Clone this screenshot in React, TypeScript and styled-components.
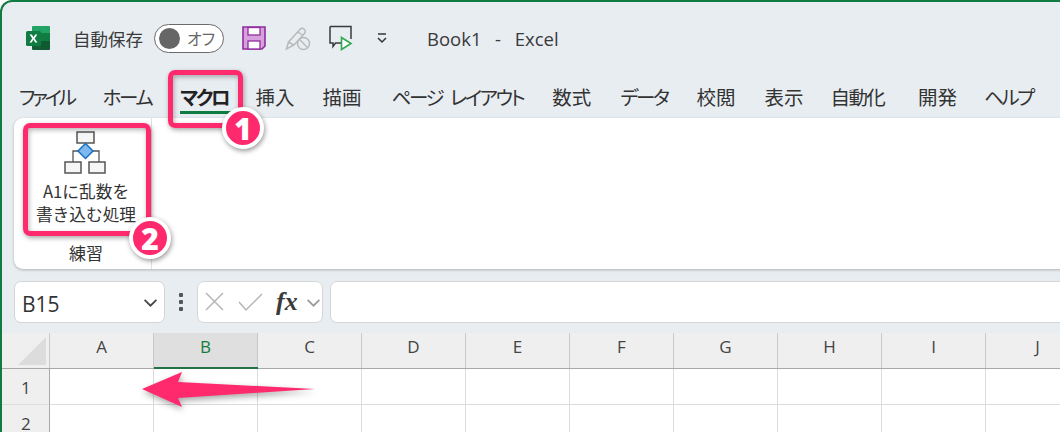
import styled, { createGlobalStyle } from 'styled-components';

const GlobalStyle = createGlobalStyle`
  html, body { margin: 0; padding: 0; background: #ffffff; overflow: hidden; }
  body { font-family: "Noto Sans CJK JP", "Noto Sans", sans-serif; color: #333; }
`
const Frame = styled.div`
  position: relative;
  width: 1060px;
  height: 432px;
  box-sizing: border-box;
  overflow: hidden;
  background: #e8edf2;
  border-top: 2px solid #107c41;
  border-left: 2px solid #107c41;
  border-top-left-radius: 12px;
`
const TitleBar = styled.div`
  display: flex;
  align-items: center;
  box-sizing: border-box;
  height: 76px;
  padding: 0 0 4px 24px;
`
const AutoSaveLabel = styled.span`
  font-size: 17.5px;
  margin-left: 23px;
  color: #3a3a3a;
`
const Toggle = styled.div`
  display: flex;
  align-items: center;
  justify-content: space-between;
  box-sizing: border-box;
  width: 70px;
  height: 29px;
  margin-left: 11px;
  padding: 0 8px 0 4px;
  background: #fff;
  border: 1px solid #6a6a6a;
  border-radius: 15px;
  font-size: 16px;
  font-feature-settings: "palt";
  color: #666;
`
const Knob = styled.span`
  width: 21px;
  height: 21px;
  border-radius: 50%;
  background: #666;
`
const QuickIcon = styled.svg<{ $left: number }>`
  display: block;
  margin-left: ${props => props.$left}px;
  flex: none;
`
const BookTitle = styled.span`
  margin-left: 39px;
  font-family: "Open Sans", "Noto Sans CJK JP", sans-serif;
  font-size: 18.5px;
  white-space: pre;
  word-spacing: 2px;
  color: #3a3a3a;
`
const Tabs = styled.div`
  display: flex;
  height: 42px;
  padding-left: 17px;
  gap: 28px;
  font-size: 19.5px;
  font-feature-settings: "palt";
  color: #333;
  white-space: nowrap;
`
const Tab = styled.div<{ $active?: boolean; $track: number; $after: number }>`
  position: relative;
  box-sizing: border-box;
  height: 36px;
  padding-top: 2px;
  line-height: 34px;
  letter-spacing: ${props => props.$track}px;
  word-spacing: 6px;
  margin-right: ${props => props.$after}px;
  font-weight: ${props => props.$active ? 700 : 400};
  color: ${props => props.$active ? '#222' : '#333'};
  &::after {
    content: '';
    display: ${props => props.$active ? 'block' : 'none'};
    position: absolute;
    left: 0;
    right: ${props => props.$track}px;
    bottom: 0;
    height: 3px;
    background: #107c41;
  }
`
const Ribbon = styled.div`
  display: flex;
  width: 1100px;
  height: 151px;
  margin-left: 12px;
  margin-top: -2px;
  background: #fff;
  border-radius: 9px;
  box-shadow: 0 1px 3px rgba(0, 0, 0, 0.25);
`
const RibbonGroup = styled.div`
  box-sizing: border-box;
  width: 138px;
  padding-left: 7px;
  display: flex;
  flex-direction: column;
  align-items: center;
  border-right: 1px solid #e2e2e2;
`
const MacroIcon = styled.svg`
  display: block;
  margin-top: 13px;
`
const MacroLabel = styled.div`
  margin-top: 5px;
  font-size: 16.7px;
  line-height: 23px;
  text-align: center;
  white-space: nowrap;
  color: #333;
`
const GroupName = styled.div`
  margin-top: 15px;
  font-size: 17px;
  line-height: 24px;
  color: #333;
`
const FormulaRow = styled.div`
  display: flex;
  align-items: center;
  height: 42px;
  margin-top: 12px;
  padding-left: 12px;
`
const FieldBox = styled.div<{ $w: number; $left?: number }>`
  display: flex;
  align-items: center;
  box-sizing: border-box;
  width: ${props => props.$w}px;
  height: 42px;
  flex: none;
  margin-left: ${props => props.$left || 0}px;
  background: #fff;
  border: 1px solid #d5d5d5;
  border-radius: 7px;
`
const NameText = styled.span`
  margin: 3px 0 0 7px;
  flex: 1;
  font-family: "Open Sans", sans-serif;
  font-size: 21px;
  color: #333;
`
const NameChevron = styled.span`
  display: flex;
  margin-right: 6px;
`
const Dots = styled.div`
  display: flex;
  flex-direction: column;
  gap: 3px;
  width: 4px;
  margin: 0 14px;
`
const Dot = styled.span`
  width: 4px;
  height: 4px;
  border-radius: 1px;
  background: #555;
`
const FormulaIcons = styled.svg`
  display: block;
  margin-left: 7px;
  flex: none;
`
const FxText = styled.span`
  font-family: "Liberation Serif", serif;
  font-style: italic;
  font-weight: 700;
  font-size: 26px;
  margin: 0 8px 0 11px;
  color: #3a3a3a;
`
const Sheet = styled.div`
  margin-top: 10px;
  background: #fff;
`
const HeaderRow = styled.div`
  display: flex;
  height: 35px;
  background: #efefef;
  border-bottom: 1px solid #a8a8a8;
`
const Corner = styled.div`
  position: relative;
  box-sizing: border-box;
  width: 48px;
  flex: none;
  border-right: 1px solid #c8c8c8;
  &::after {
    content: '';
    position: absolute;
    right: 3px;
    bottom: 3px;
    border-style: solid;
    border-width: 0 0 28px 28px;
    border-color: transparent transparent #dcdcdc transparent;
  }
`
const ColHead = styled.div<{ $selected?: boolean }>`
  position: relative;
  box-sizing: border-box;
  width: 104px;
  flex: none;
  text-align: center;
  font-family: "Open Sans", sans-serif;
  font-size: 17px;
  line-height: 27px;
  border-right: 1px solid #c8c8c8;
  background: ${props => props.$selected ? '#dfdfdf' : 'transparent'};
  color: ${props => props.$selected ? '#107c41' : '#444'};
  &::after {
    content: '';
    display: ${props => props.$selected ? 'block' : 'none'};
    position: absolute;
    left: 0;
    right: -1px;
    bottom: -1px;
    height: 2px;
    background: #217346;
  }
`
const Row = styled.div`
  display: flex;
  height: 36px;
`
const RowHead = styled.div`
  box-sizing: border-box;
  width: 48px;
  flex: none;
  padding-left: 19px;
  background: #efefef;
  border-right: 1px solid #a8a8a8;
  border-bottom: 1px solid #dcdcdc;
  font-family: "Open Sans", sans-serif;
  font-size: 17px;
  line-height: 37px;
  color: #444;
`
const Cell = styled.div`
  box-sizing: border-box;
  width: 104px;
  flex: none;
  border-right: 1px solid #dcdcdc;
  border-bottom: 1px solid #dcdcdc;
`
const Callout = styled.div<{ $x: number; $y: number; $w: number; $h: number }>`
  position: absolute;
  left: ${props => props.$x}px;
  top: ${props => props.$y}px;
  width: ${props => props.$w}px;
  height: ${props => props.$h}px;
  box-sizing: border-box;
  border: 5px solid #ff2a6d;
  border-radius: 7px;
  box-shadow: 1px 2px 5px rgba(0, 0, 0, 0.35), inset 1px 2px 5px rgba(0, 0, 0, 0.3);
`
const Badge = styled.div<{ $x: number; $y: number }>`
  position: absolute;
  left: ${props => props.$x}px;
  top: ${props => props.$y}px;
  width: 34px;
  height: 34px;
  box-sizing: content-box;
  display: flex;
  align-items: center;
  justify-content: center;
  background: #ff2a6d;
  border: 4px solid #fff;
  border-radius: 50%;
  box-shadow: 1px 2px 5px rgba(0, 0, 0, 0.4);
  font-family: "Open Sans", sans-serif;
  font-size: 30px;
  font-weight: 800;
  color: #fff;
`
const Arrow = styled.svg`
  position: absolute;
  left: 138px;
  top: 368px;
  filter: drop-shadow(1px 3px 3px rgba(0, 0, 0, 0.35));
`

// kana tabs are set tighter than the kanji ones, after = space kept behind the tab
const tabs = [
  { label: 'ファイル', track: -3.2, after: 1 },
  { label: 'ホーム', track: -2.4, after: 0.8 },
  { label: 'マクロ', track: -2.4, after: -0.8 },
  { label: '挿入', track: 0, after: 0 },
  { label: '描画', track: 0, after: 2 },
  { label: 'ページ レイアウト', track: -2.4, after: 1.2 },
  { label: '数式', track: 0, after: 1 },
  { label: 'データ', track: -2.5, after: 1.1 },
  { label: '校閲', track: 0, after: 1 },
  { label: '表示', track: 0, after: -1 },
  { label: '自動化', track: -1.6, after: 5.8 },
  { label: '開発', track: 0, after: -1 },
  { label: 'ヘルプ', track: -2.4, after: 0 },
]
const columns = ['A', 'B', 'C', 'D', 'E', 'F', 'G', 'H', 'I', 'J']

const ExcelLogo = () => (
  <QuickIcon $left={0} width="24" height="24" viewBox="0 0 24 24">
    <path d="M7 0h16a1 1 0 0 1 1 1v6H6V1a1 1 0 0 1 1-1z" fill="#21a366" />
    <rect x="15" y="7" width="9" height="8" fill="#107c41" />
    <rect x="6" y="7" width="9" height="8" fill="#33c481" />
    <path d="M6 15h9v9H7a1 1 0 0 1-1-1z" fill="#185c37" />
    <path d="M15 15h9v8a1 1 0 0 1-1 1h-8z" fill="#0f5a33" />
    <rect x="0" y="5" width="15" height="15" rx="1.5" fill="#107c41" />
    <path d="M3.6 8.5h2.3l1.6 2.8 1.6-2.8h2.2l-2.6 4 2.7 4H9.1l-1.7-2.9-1.7 2.9H3.5l2.7-4z" fill="#fff" />
  </QuickIcon>
)

const SaveIcon = () => (
  <QuickIcon $left={18} width="24" height="24" viewBox="0 0 24 24">
    <path d="M1 1h22v19l-3 3H1z" fill="#d8a0de" stroke="#8f2d9c" strokeWidth="1.6" />
    <rect x="6" y="1.5" width="12" height="7.5" fill="#fff" stroke="#8f2d9c" strokeWidth="1.3" />
    <rect x="6" y="15" width="12" height="8" fill="#fff" stroke="#8f2d9c" strokeWidth="1.3" />
  </QuickIcon>
)

const PenIcon = () => (
  <QuickIcon $left={19} width="26" height="26" viewBox="0 0 26 26" fill="none" stroke="#b9b9b9" strokeWidth="1.5">
    <path d="M1.5 24l2-7L15 4.5a3 3 0 0 1 4.5 4L9 20z" />
    <path d="M3.5 17l5 3M13 7l5 3.5" />
    <circle cx="18.5" cy="18.5" r="6" fill="#e8edf2" />
    <path d="M14.5 14.5l8 8" />
  </QuickIcon>
)

const CommentPlayIcon = () => (
  <QuickIcon $left={18} width="24" height="26" viewBox="0 0 24 26" fill="none">
    <path d="M1 1.5h21V14M12 18H6.5L4 21.5V18H1V1.5" stroke="#3a3a3a" strokeWidth="1.5" />
    <path d="M12.5 12.5l9.5 6-9.5 6z" fill="#fff" stroke="#2fa84f" strokeWidth="1.6" />
  </QuickIcon>
)

const MoreIcon = () => (
  <QuickIcon $left={23} width="12" height="12" viewBox="0 0 12 12" fill="none" stroke="#333" strokeWidth="1.5">
    <path d="M2 2h8" />
    <path d="M2 6l4 4 4-4" />
  </QuickIcon>
)

const Flowchart = () => (
  <MacroIcon width="44" height="44" viewBox="0 0 44 44" fill="none">
    <path d="M9 39V20h13M35 39V20H22" stroke="#555" strokeWidth="1.3" />
    <rect x="13" y="1" width="17" height="11" fill="#f6f6f6" stroke="#555" strokeWidth="1.5" />
    <rect x="1" y="31" width="16" height="11" fill="#f6f6f6" stroke="#555" strokeWidth="1.5" />
    <rect x="25" y="31" width="16" height="11" fill="#f6f6f6" stroke="#555" strokeWidth="1.5" />
    <path d="M21.5 12.5l7.5 7.5-7.5 7.5L14 20z" fill="#7db8ee" stroke="#1a6fc0" strokeWidth="1.5" />
  </MacroIcon>
)

const Chevron = ({ color, w }: { color: string; w: number }) => (
  <svg width={w} height={w} viewBox="0 0 14 14" fill="none" stroke={color} strokeWidth="1.6">
    <path d="M1.5 4.5L7 10l5.5-5.5" />
  </svg>
)

export default function App() {
  return (
    <Frame>
      <GlobalStyle />
      <TitleBar>
        <ExcelLogo />
        <AutoSaveLabel>自動保存</AutoSaveLabel>
        <Toggle><Knob />オフ</Toggle>
        <SaveIcon />
        <PenIcon />
        <CommentPlayIcon />
        <MoreIcon />
        <BookTitle>{'Book1  -  Excel'}</BookTitle>
      </TitleBar>
      <Tabs>
        {tabs.map(t => <Tab key={t.label} $track={t.track} $after={t.after} $active={t.label === 'マクロ'}>{t.label}</Tab>)}
      </Tabs>
      <Ribbon>
        <RibbonGroup>
          <Flowchart />
          <MacroLabel>A1に乱数を<br />書き込む処理</MacroLabel>
          <GroupName>練習</GroupName>
        </RibbonGroup>
      </Ribbon>
      <FormulaRow>
        <FieldBox $w={151}>
          <NameText>B15</NameText>
          <NameChevron><Chevron color="#444" w={15} /></NameChevron>
        </FieldBox>
        <Dots><Dot /><Dot /><Dot /></Dots>
        <FieldBox $w={126}>
          <FormulaIcons width="60" height="20" viewBox="0 0 60 20" fill="none" stroke="#b5b5b5" strokeWidth="1.5">
            <path d="M1 1l17 17M18 1L1 18" />
            <path d="M34 10l7 8L57 2" />
          </FormulaIcons>
          <FxText>fx</FxText>
          <Chevron color="#9a9a9a" w={15} />
        </FieldBox>
        <FieldBox $w={760} $left={7} />
      </FormulaRow>
      <Sheet>
        <HeaderRow>
          <Corner />
          {columns.map(c => <ColHead key={c} $selected={c === 'B'}>{c}</ColHead>)}
        </HeaderRow>
        {[1, 2].map(r => (
          <Row key={r}>
            <RowHead>{r}</RowHead>
            {columns.map(c => <Cell key={c} />)}
          </Row>
        ))}
      </Sheet>
      <Callout $x={166} $y={68} $w={75} $h={58} />
      <Callout $x={21} $y={121} $w={128} $h={113} />
      <Badge $x={220} $y={105}>1</Badge>
      <Badge $x={127} $y={215}>2</Badge>
      <Arrow width="182" height="44" viewBox="0 0 182 44">
        <path d="M2 19L42 2l-4 10 137 7-137 9 4 9z" fill="#ff2a6d" />
      </Arrow>
    </Frame>
  )
}
